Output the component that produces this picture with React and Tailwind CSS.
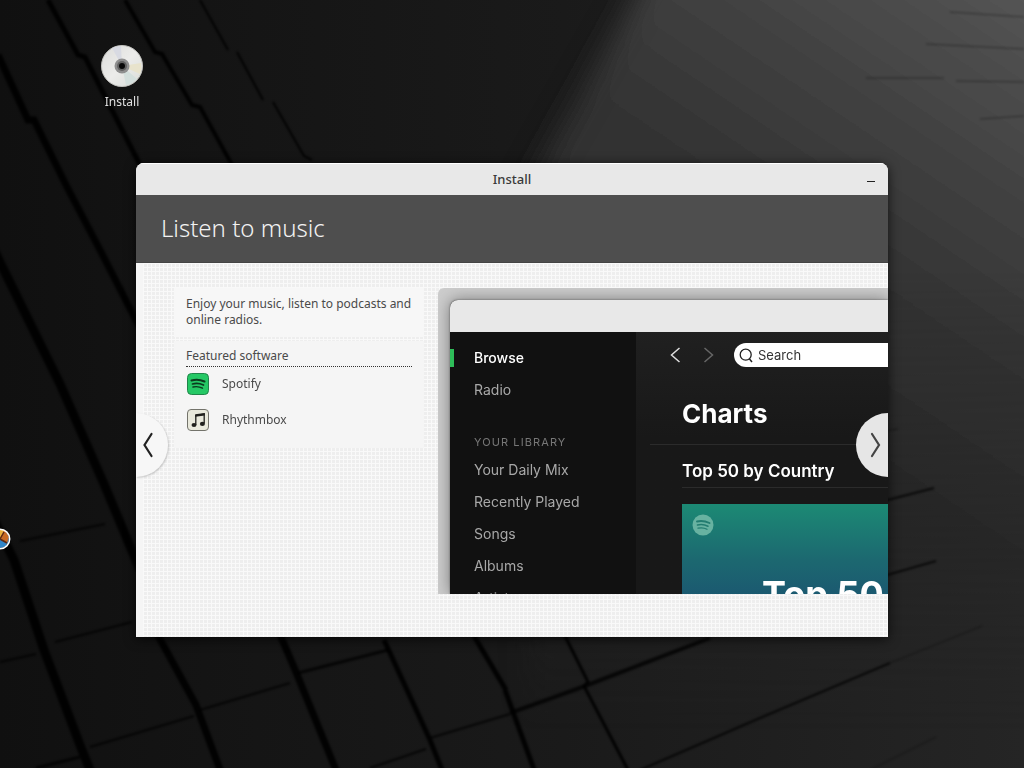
import React from "react";

const strips = [
  ["M48 0 L78 55 L85 57 L140 165", 5],
  ["M125 0 L155 52 L162 54 L192 105 L200 107 L232 165", 4],
  ["M200 0 L228 50 M237 52 L263 100 M273 102 L304 156 L312 160", 2],
  ["M-2 55 L28 120 L34 120 L66 185 L100 250 L140 328", 7],
  ["M-6 250 L60 384 L104 484 L140 570", 9],
  ["M-6 520 L14 560 L44 650 L80 745 L92 775", 9],
  ["M155 630 L196 705 L222 775", 7],
  ["M278 630 L296 672 L338 775", 7],
  ["M384 640 L430 740 L444 775", 5],
  ["M474 636 L506 690", 5],
  ["M505 690 L536 775", 5],
  ["M565 636 L588 682 L584 686 L628 770", 3],
];

const joints = [
  ["M20 541 L105 524", 2],
  ["M55 642 L132 622", 2],
  ["M0 662 L36 654", 2],
  ["M90 747 L194 716", 2],
  ["M200 710 L290 683", 2],
  ["M298 673 L388 650", 3],
  ["M36 768 L80 757", 3],
  ["M430 738 L510 714", 2],
  ["M370 768 L426 749", 2],
  ["M510 713 L585 686 L710 638", 4],
  ["M640 770 L760 718 L890 663", 2],
  ["M890 663 L982 626", 1],
  ["M880 577 L936 561", 2],
  ["M880 502 L934 488", 2],
  ["M880 432 L898 429", 1],
  ["M870 770 L936 737", 1],
  ["M926 44 L1024 49", 1],
  ["M950 12 L1024 17", 1],
  ["M866 78 L944 78", 1],
  ["M956 81 L1024 82", 1],
  ["M980 119 L1024 116", 1],
];

function Wallpaper() {
  return (
    <svg
      className="absolute inset-0 h-full w-full"
      viewBox="0 0 1024 768"
      preserveAspectRatio="xMidYMid slice"
      aria-hidden="true"
    >
      <defs>
        <linearGradient id="base" x1="0" y1="0" x2="1" y2="0">
          <stop offset="0" stopColor="#101010" />
          <stop offset="0.25" stopColor="#151515" />
          <stop offset="0.55" stopColor="#1a1a1a" />
          <stop offset="1" stopColor="#252525" />
        </linearGradient>
        <linearGradient id="glow" gradientUnits="userSpaceOnUse" x1="1024" y1="0" x2="740" y2="420">
          <stop offset="0" stopColor="#545454" />
          <stop offset="0.3" stopColor="#434343" />
          <stop offset="0.6" stopColor="#343434" />
          <stop offset="1" stopColor="#2a2a2a" />
        </linearGradient>
        <linearGradient id="fade" x1="0" y1="0" x2="0" y2="1">
          <stop offset="0.35" stopColor="#fff" />
          <stop offset="0.95" stopColor="#000" />
        </linearGradient>
        <mask id="fadeDown" maskUnits="userSpaceOnUse" x="0" y="0" width="1024" height="768">
          <rect width="1024" height="768" fill="url(#fade)" />
        </mask>
        <filter id="soft" x="-20%" y="-20%" width="140%" height="140%">
          <feGaussianBlur stdDeviation="14" />
        </filter>
        <filter id="edge">
          <feGaussianBlur stdDeviation="1" />
        </filter>
      </defs>
      <rect width="1024" height="768" fill="url(#base)" />
      <g mask="url(#fadeDown)">
        <path d="M668 -60 L526 190 L526 900 L1100 900 L1100 -60 Z" fill="url(#glow)" filter="url(#soft)" />
      </g>
      <g fill="none" stroke="#050505" filter="url(#edge)">
        {strips.map(([d, w]) => (
          <path key={d} d={d} strokeWidth={w} opacity="0.9" />
        ))}
        {joints.map(([d, w]) => (
          <path key={d} d={d} strokeWidth={w} opacity={w === 1 ? 0.4 : 0.75} />
        ))}
      </g>
    </svg>
  );
}

function Disc() {
  return (
    <svg className="h-[42px] w-[42px]" viewBox="0 0 42 42" aria-hidden="true">
      <defs>
        <linearGradient id="disc" x1="0" y1="0" x2="1" y2="1">
          <stop offset="0" stopColor="#dcdcda" />
          <stop offset="0.5" stopColor="#ececea" />
          <stop offset="1" stopColor="#d9dcd8" />
        </linearGradient>
      </defs>
      <circle cx="21" cy="21" r="20.5" fill="url(#disc)" stroke="#c4c4c0" />
      <path d="M21 21 L11 3 A20 20 0 0 1 20 1 Z" fill="#d8dae2" />
      <path d="M21 21 L40 18 A20 20 0 0 1 39 29 Z" fill="#e8e3cc" />
      <path d="M21 21 L36 34 A20 20 0 0 1 25 40 Z" fill="#d3dfdc" />
      <circle cx="21" cy="21" r="7.5" fill="#8f8f8f" />
      <circle cx="21" cy="21" r="5" fill="#626262" />
      <circle cx="21" cy="21" r="3" fill="#080808" />
    </svg>
  );
}

function SpotifyIcon() {
  return (
    <svg className="h-6 w-6 shrink-0" viewBox="0 0 24 24" aria-hidden="true">
      <rect x="1.5" y="1.5" width="21" height="21" rx="4" fill="#25c865" stroke="#21844a" />
      <g fill="none" stroke="#0c3a1e" strokeLinecap="round">
        <path d="M5.5 8.5 Q12 6.5 18.5 9.5" strokeWidth="2" />
        <path d="M6.5 12 Q12 10.5 17.5 13" strokeWidth="1.7" />
        <path d="M7 15 Q12 13.8 16.5 16.2" strokeWidth="1.4" />
      </g>
    </svg>
  );
}

function RhythmboxIcon() {
  return (
    <svg className="h-6 w-6 shrink-0" viewBox="0 0 24 24" aria-hidden="true">
      <rect x="1.5" y="1.5" width="21" height="21" rx="3.5" fill="#e9e9dc" stroke="#73736b" />
      <path d="M9.8 17 V7.5 L18.2 6 V15.5" fill="none" stroke="#20201d" strokeWidth="1.3" />
      <path d="M9.2 6.2 L18.8 5 V7.4 L9.2 8.8 Z" fill="#20201d" />
      <ellipse cx="8" cy="17" rx="2.5" ry="2.1" fill="#20201d" />
      <ellipse cx="16.4" cy="15.9" rx="2.5" ry="2.1" fill="#20201d" />
    </svg>
  );
}

function Chevron({ direction, className }) {
  return (
    <svg className={className} viewBox="0 0 12 26" fill="none" stroke="currentColor" aria-hidden="true">
      <path
        d={direction === "left" ? "M9.5 2 L2.5 13 L9.5 24" : "M2 2 L9 13 L2 24"}
        strokeWidth="2.2"
        strokeLinecap="round"
      />
    </svg>
  );
}

function NavChevron({ direction }) {
  return (
    <svg className="h-4 w-[10px]" viewBox="0 0 10 16" fill="none" stroke="currentColor" aria-hidden="true">
      <path d={direction === "left" ? "M9.5 1 L1.5 8 L9.5 15" : "M0.5 1 L8.5 8 L0.5 15"} strokeWidth="1.5" />
    </svg>
  );
}

const library = ["Your Daily Mix", "Recently Played", "Songs", "Albums", "Artists"];

function Player() {
  return (
    <div className="flex h-full flex-col overflow-hidden rounded-tl-lg bg-[#191919] font-[Inter,sans-serif] shadow-[0_0_2px_#555,0_0_16px_#777]">
      <div className="h-8 shrink-0 bg-[#e8e8e8]" />
      <div className="flex min-h-0 flex-1">
        <nav className="w-[186px] shrink-0 bg-[#111] pt-4 text-sm leading-5 text-[#a8a8a8]">
          <a href="#browse" className="flex h-5 items-center gap-5 font-medium text-white">
            <span className="h-[18px] w-1 bg-[#2ebd59]" />
            Browse
          </a>
          <a href="#radio" className="mt-3 block pl-6">Radio</a>
          <h3 className="mt-8 pl-6 text-[11px] leading-5 tracking-widest text-[#777]">YOUR LIBRARY</h3>
          <ul className="mt-2 flex flex-col gap-3 pl-6">
            {library.map((item) => (
              <li key={item}>
                <a href="#library" className="block whitespace-nowrap">{item}</a>
              </li>
            ))}
          </ul>
        </nav>
        <section className="min-w-0 flex-1 bg-linear-to-b from-[#202020] to-[#181818] to-40% pl-[14px]">
          <div className="flex h-[46px] items-center pl-5">
            <button type="button" aria-label="Back" className="text-[#ddd]">
              <NavChevron direction="left" />
            </button>
            <button type="button" aria-label="Forward" className="ml-6 text-[#666]">
              <NavChevron direction="right" />
            </button>
            <label className="ml-5 flex h-6 min-w-0 flex-1 items-center gap-1 rounded-l-full bg-white pl-[5px] text-[#222]">
              <svg className="h-[15px] w-[15px] shrink-0" viewBox="0 0 15 15" fill="none" stroke="currentColor" aria-hidden="true">
                <circle cx="6.7" cy="6.7" r="5.5" strokeWidth="1.3" />
                <path d="M10.3 10.8 L13 14" strokeWidth="1.5" />
              </svg>
              <input
                aria-label="Search"
                placeholder="Search"
                className="w-full min-w-0 bg-transparent text-[13px] leading-5 outline-none placeholder:text-[#333]"
              />
            </label>
          </div>
          <div className="h-[67px] border-b border-[#2b2b2b] pt-4 pl-8">
            <h2 className="text-[26px] leading-10 font-bold text-white">Charts</h2>
          </div>
          <div className="pt-3 pl-8">
            <h3 className="h-[31px] border-b border-[#2b2b2b] text-[17px] leading-7 font-semibold whitespace-nowrap text-white">Top 50 by Country</h3>
            <div className="mt-4 h-[160px] bg-linear-to-b from-[#1c8a74] via-[#1c6870] via-35% to-[#1b5070] to-70% pt-[10px] pl-[10px]">
              <svg className="h-[22px] w-[22px]" viewBox="0 0 22 22" aria-hidden="true">
                <circle cx="11" cy="11" r="10.5" fill="#68b2a1" />
                <g fill="none" stroke="#237c70" strokeLinecap="round">
                  <path d="M5 7.5 Q11 6 17.5 9" strokeWidth="1.9" />
                  <path d="M5.5 11 Q11 9.7 16 12.2" strokeWidth="1.6" />
                  <path d="M6 14.2 Q11 13 15 15.2" strokeWidth="1.3" />
                </g>
              </svg>
              <p className="pt-[38px] pl-[70px] text-[36px] leading-10 font-bold whitespace-nowrap text-white">Top 50</p>
            </div>
          </div>
        </section>
      </div>
    </div>
  );
}

function InstallerWindow() {
  return (
    <main className="relative mx-auto w-full max-w-[752px] overflow-hidden rounded-t-lg bg-[#f7f7f7] font-['Noto_Sans',sans-serif] shadow-[0_2px_12px_rgba(0,0,0,0.7)]">
      <header className="grid h-8 grid-cols-[1fr_auto_1fr] items-center border-t border-white bg-[#e8e8e8]">
        <span />
        <h1 className="pb-[2px] text-[13px] leading-5 font-medium text-[#3a3a3a]">Install</h1>
        <button type="button" aria-label="Minimize" className="mr-[7px] flex h-5 w-5 items-center justify-center justify-self-end pt-1">
          <span className="h-px w-2 bg-[#222]" />
        </button>
      </header>
      <div className="flex h-[68px] items-center border-b border-[#444] bg-[#4e4e4e] pb-[2px] pl-[25px] text-[#f2f2f2]">
        <h2 className="text-2xl leading-8 font-light">Listen to music</h2>
      </div>
      <div className="relative border-l-[7px] border-[#f5f5f5]">
        <div className="flex h-[374px] gap-[14px] bg-[#eeeeee] bg-[linear-gradient(#f9f9f9_1px,transparent_1px),linear-gradient(90deg,#f9f9f9_1px,transparent_1px)] bg-[size:4px_4px] pt-[25px] pl-[31px]">
          <div className="w-[250px] shrink-0 text-xs leading-4 text-[#4a4a4a]">
            <p className="bg-[#f7f7f7] px-3 pt-2 pb-[9px]">
              Enjoy your music, listen to podcasts and online radios.
            </p>
            <section className="mt-1 bg-[#f5f5f5] px-3 pt-[7px] pb-4">
              <h3 className="border-b border-dotted border-[#333] pb-[2px]">Featured software</h3>
              <ul className="mt-[5px] flex flex-col gap-3">
                <li className="flex items-center gap-3">
                  <SpotifyIcon />
                  Spotify
                </li>
                <li className="flex items-center gap-3">
                  <RhythmboxIcon />
                  Rhythmbox
                </li>
              </ul>
            </section>
          </div>
          <div className="h-[306px] min-w-0 flex-1 overflow-hidden rounded-tl-md bg-[#cdcdcd] pt-3 pl-3">
            <Player />
          </div>
        </div>
        <button
          type="button"
          aria-label="Previous"
          className="absolute top-[150px] -left-[7px] flex h-16 w-8 items-center rounded-r-full bg-[#f7f7f7] pl-[6px] text-[#222] shadow-[1px_1px_2px_rgba(0,0,0,0.18)]"
        >
          <Chevron direction="left" className="h-[26px] w-3" />
        </button>
        <button
          type="button"
          aria-label="Next"
          className="absolute top-[150px] right-0 flex h-16 w-8 items-center rounded-l-full bg-[#e6e6e6] pl-[14px] text-[#444]"
        >
          <Chevron direction="right" className="h-[26px] w-3" />
        </button>
      </div>
    </main>
  );
}

export default function App() {
  return (
    <div className="relative min-h-screen overflow-hidden bg-[#111] pt-[163px]">
      <Wallpaper />
      <button
        type="button"
        className="absolute top-[45px] left-[98px] flex w-12 flex-col items-center gap-[7px] font-['Noto_Sans',sans-serif] text-xs leading-4 text-[#e0e0e0]"
      >
        <Disc />
        Install
      </button>
      <svg className="absolute top-[528px] left-[-11px] h-[22px] w-[22px]" viewBox="0 0 22 22" aria-hidden="true">
        <circle cx="11" cy="11" r="9" fill="#3186c9" />
        <path d="M11 11 L4 2 H16 L20 9 L18 15 Z" fill="#c96a24" />
        <path d="M11 11 L8 2 H15 Z" fill="#e9b13c" />
        <path d="M11 11 L15 4 M11 11 L18 15" stroke="#5b2a17" strokeWidth="1.5" />
        <circle cx="11" cy="11" r="9.7" fill="none" stroke="#fff" strokeWidth="1.5" />
      </svg>
      <InstallerWindow />
    </div>
  );
}
